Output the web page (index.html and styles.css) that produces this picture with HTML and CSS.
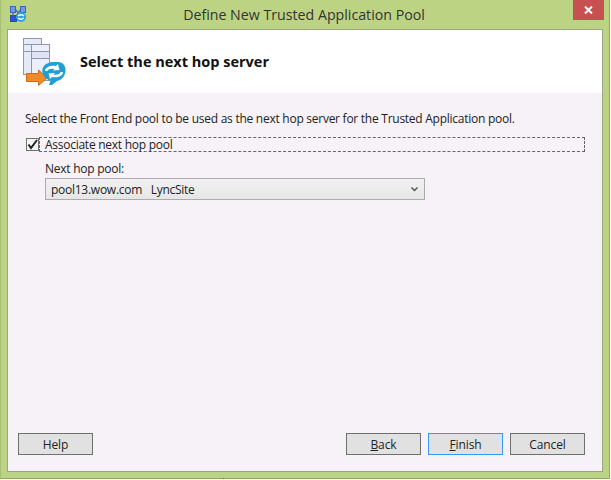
FILE: index.html
```html
<!DOCTYPE html>
<html lang="en">
<head>
    <meta charset="UTF-8">
    <title>Define New Trusted Application Pool</title>
    <link rel="stylesheet" href="styles.css">
</head>
<body>
    <div class="window">
        <div class="titlebar">
            <svg class="app-icon" width="16" height="16" viewBox="0 0 16 16">
                <rect x="0.500" y="0.500" width="5" height="6" fill="#6f9be6" stroke="#3c62c0"/>
                <rect x="10.500" y="0.500" width="5" height="6" fill="#6f9be6" stroke="#3c62c0"/>
                <rect x="0.500" y="9.500" width="6" height="6" fill="#2f55c0" stroke="#2a4aa8"/>
                <path d="M3 6 V10 M13 6 V9 M5 3 L11 10 M11 3 L6 10" stroke="#3a62c4" stroke-width="1.200" fill="none"/>
                <circle cx="11" cy="11" r="5" fill="#2b9fd8"/>
                <path d="M8 10 Q11 7.500 14 10 M14 12 Q11 14.500 8 12" stroke="#fff" stroke-width="1.400" fill="none"/>
            </svg>
            <div class="title">Define New Trusted Application Pool</div>
            <div class="close">
                <svg width="9" height="8" viewBox="0 0 9 8"><path d="M1 0.500 L8 7.500 M8 0.500 L1 7.500" stroke="#fff" stroke-width="2" fill="none"/></svg>
            </div>
        </div>
        <div class="client">
            <div class="banner">
                <svg class="wizard-icon" width="44" height="49" viewBox="0 0 44 49">
                    <rect x="1.500" y="0.500" width="18" height="36" fill="#e6e9f6" stroke="#8e97ad"/>
                    <path d="M2 6.500 H19 M2 13.500 H19" stroke="#8e97ad"/>
                    <rect x="9.500" y="6.500" width="18" height="36" fill="#eceffb" stroke="#8e97ad"/>
                    <path d="M10 13.500 H27 M10 20.500 H27" stroke="#8e97ad"/>
                    <rect x="10" y="14" width="17" height="6" fill="#dfe3f2"/>
                    <path d="M4.500 35.500 H16.500 V32 L25 40 L16.500 47.500 V43.500 H4.500 Z" fill="#ee8c2c" stroke="#c96a14"/>
                    <path d="M27 47 L28.500 43 C22 40 19.500 35 20.500 31 C22 26 27 24 31 24 H36 C41 24 44 28 43.500 33 C43 38 40 42 35 43 L30 47 Z" fill="#1f9fd6"/>
                    <path d="M23 33 C23 29 29 27 34 28 L36 26 L37.500 32 L31 32.500 L32.500 31 C29.500 30.500 26 31 25.500 33 Z M41 34 C41 38 36 40 30 39 L28 41 L26.500 35.500 L33 35 L31.500 36.500 C34.500 37 38 36.500 38.500 34 Z" fill="#fff"/>
                </svg>
                <h1>Select the next hop server</h1>
            </div>
            <div class="content">
                <p class="intro">Select the Front End pool to be used as the next hop server for the Trusted Application pool.</p>
                <div class="check-row">
                    <span class="checkbox">
                        <svg width="11" height="11" viewBox="0 0 11 11"><path d="M1.500 5.500 L4 9 L10 1" stroke="#222" stroke-width="2" fill="none"/></svg>
                    </span>
                    <span class="check-label">Associate next hop pool</span>
                </div>
                <div class="pool-field">
                    <div class="field-label">Next hop pool:</div>
                    <div class="select">
                        <span class="select-value">pool13.wow.com&nbsp;&nbsp; LyncSite</span>
                        <svg width="7" height="5" viewBox="0 0 7 5"><path d="M0.500 0.500 L3.500 3.500 L6.500 0.500" stroke="#555" stroke-width="1.500" fill="none"/></svg>
                    </div>
                </div>
            </div>
            <div class="buttons">
                <button class="btn">Help</button>
                <div class="nav-buttons">
                    <button class="btn"><u>B</u>ack</button>
                    <button class="btn btn-default"><u>F</u>inish</button>
                    <button class="btn">Cancel</button>
                </div>
            </div>
        </div>
    </div>
</body>
</html>
```

FILE: styles.css
```css
html, body {
    margin: 0;
    padding: 0;
    background: #fff;
}

body {
    font-family: 'Open Sans', 'Noto Sans', sans-serif;
    font-size: 12px;
    letter-spacing: -0.26px;
    color: #222;
    overflow: hidden;
}

.window {
    position: relative;
    box-sizing: border-box;
    width: 610px;
    height: 479px;
    background: #bdd384;
    border-right: 1px solid #8fa668;
    border-bottom: 1px solid #8fa668;
    border-left: 1px solid #a6bf74;
    padding: 0 6px 6px 6px;
    display: flex;
    flex-direction: column;
}

.window::after {
    content: "";
    position: absolute;
    left: 222px;
    bottom: -2px;
    width: 1px;
    height: 2px;
    background: #666;
}

.titlebar {
    height: 29px;
    display: flex;
    align-items: flex-start;
    flex-shrink: 0;
}

.app-icon {
    margin: 6px 0 0 3px;
}

.title {
    flex: 1;
    text-align: center;
    font-size: 14.200px;
    letter-spacing: 0;
    line-height: 30px;
    color: #333;
    padding-left: 9px;
}

.close {
    width: 31px;
    height: 20px;
    background: #c75050;
    display: flex;
    align-items: center;
    justify-content: center;
    margin-right: -1px;
}

.client {
    flex: 1;
    display: flex;
    flex-direction: column;
    background: #f6f2f7;
    border: 1px solid #98a886;
    border-bottom-color: #98a08a;
}

.banner {
    height: 63px;
    background: #fff;
    display: flex;
    align-items: flex-start;
    flex-shrink: 0;
}

.wizard-icon {
    margin: 8px 0 0 14px;
}

.banner h1 {
    margin: 22px 0 0 14px;
    font-size: 14.500px;
    line-height: 20px;
    font-weight: 700;
    letter-spacing: 0;
    color: #111;
}

.content {
    flex: 1;
    padding: 17px 17px 0 17px;
}

.intro {
    margin: 0;
    line-height: 17px;
}

.check-row {
    margin-top: 10px;
    display: flex;
    align-items: center;
    height: 15px;
}

.checkbox {
    box-sizing: border-box;
    width: 13px;
    height: 13px;
    background: #f4f4f4;
    border: 1px solid #707070;
    margin-left: 1px;
    display: flex;
    align-items: center;
    justify-content: center;
    flex-shrink: 0;
}

.check-label {
    flex: 1;
    box-sizing: border-box;
    height: 15px;
    line-height: 13px;
    margin-left: 0;
    padding-left: 5px;
    border: 1px dashed #666;
}

.pool-field {
    padding-left: 20px;
    margin-top: 8px;
}

.field-label {
    line-height: 17px;
}

.select {
    box-sizing: border-box;
    width: 380px;
    height: 22px;
    margin-top: 1px;
    border: 1px solid #acacac;
    background: linear-gradient(to bottom, #f0f0f0, #ececec 55%, #e6e6e6);
    display: flex;
    align-items: center;
    justify-content: space-between;
    padding: 0 6px 0 5px;
}

.buttons {
    display: flex;
    justify-content: space-between;
    padding: 0 17px 16px 10px;
}

.nav-buttons {
    display: flex;
    gap: 7px;
}

.btn {
    box-sizing: border-box;
    width: 75px;
    height: 22px;
    padding: 0;
    background: #e1e1e1;
    border: 1px solid #707070;
    font-family: inherit;
    font-size: 12px;
    letter-spacing: -0.1px;
    color: #222;
}

.btn-default {
    border-color: #3399ff;
}
```
